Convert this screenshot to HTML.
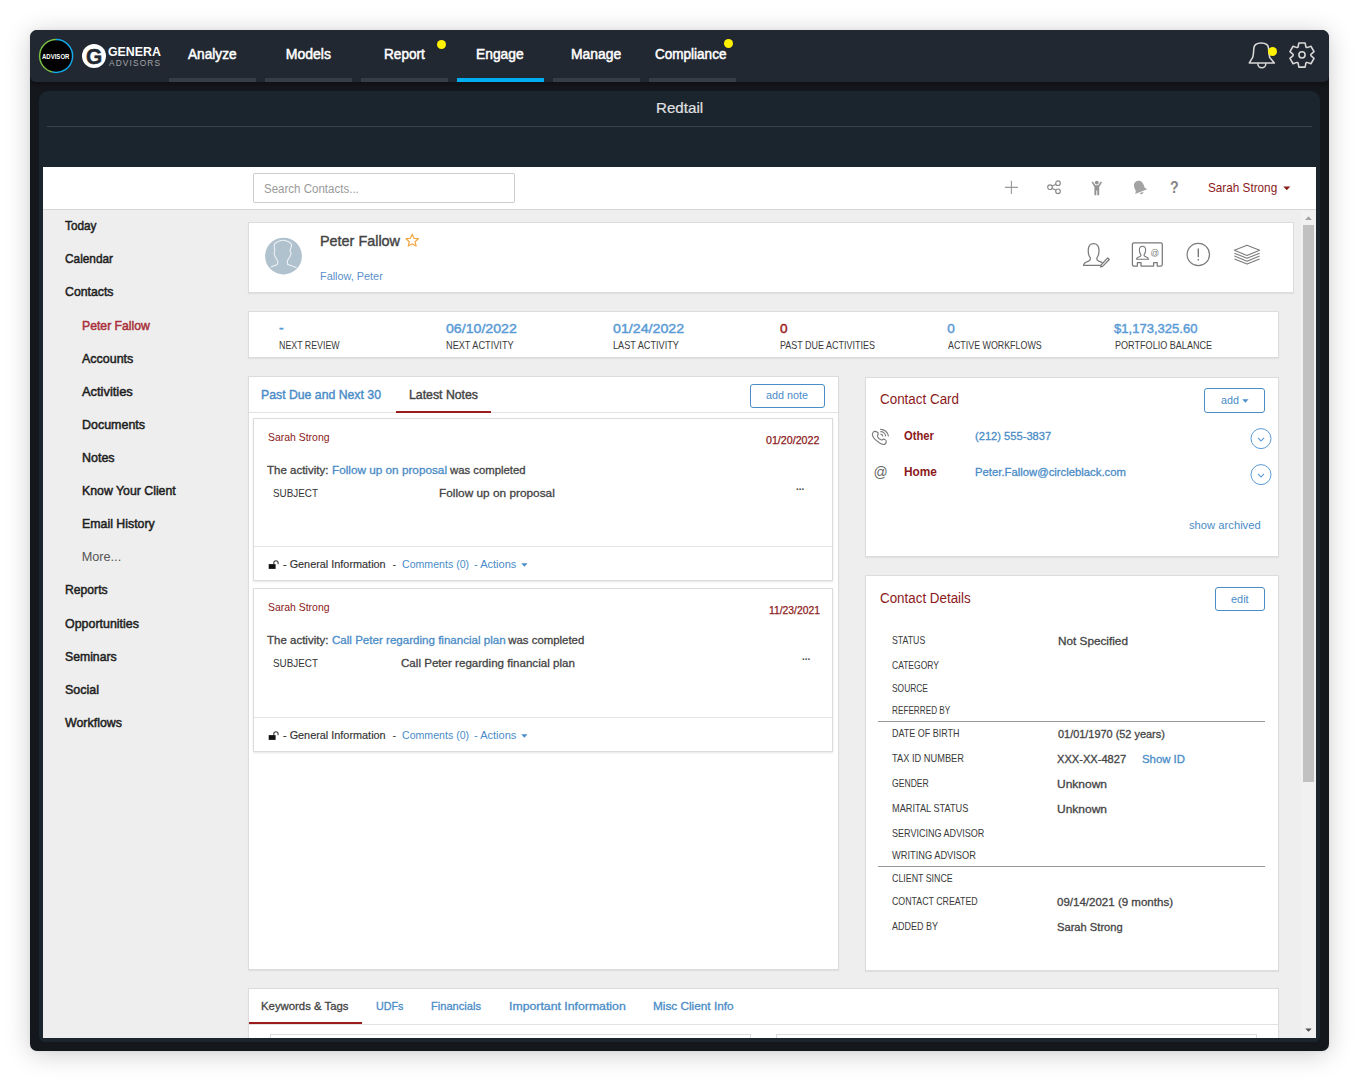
<!DOCTYPE html>
<html lang="en"><head><meta charset="utf-8"><title>Redtail - Peter Fallow</title>
<style>
html,body{margin:0;padding:0}
body{width:1359px;height:1081px;background:#fff;position:relative;overflow:hidden;font-family:"Liberation Sans",sans-serif}
.t{position:absolute;white-space:nowrap;transform-origin:0 50%;line-height:normal}
.a{position:absolute;box-sizing:border-box}
.card{position:absolute;box-sizing:border-box;background:#fff;border:1px solid #dcdcdc;box-shadow:0 1px 1px rgba(0,0,0,.06)}
.btn{position:absolute;box-sizing:border-box;border:1px solid #4a8cc7;border-radius:3px;background:#fff}
.ul{position:absolute;top:78px;height:4px;width:87px;background:#363d47}
.dot{position:absolute;width:9px;height:9px;border-radius:50%;background:#fff200}
svg{position:absolute;overflow:visible}
</style></head><body>
<!-- window -->
<div class="a" id="win" style="left:30px;top:30px;width:1299px;height:1021px;background:#14171b;border-radius:7px;box-shadow:0 3px 26px rgba(0,0,0,.2),0 0 4px rgba(0,0,0,.05);overflow:hidden"><div class="a" id="nav" style="left:0;top:0;width:1299px;height:52px;background:#222831;border-radius:7px 7px 6px 6px;box-shadow:0 2px 5px rgba(0,0,0,.35)"></div></div>
<div class="a" id="panel" style="left:39px;top:91px;width:1281px;height:951px;background:#1b252e;border-radius:9px 9px 6px 6px"></div>
<div class="a" style="left:47px;top:126px;width:1265px;height:1px;background:#36424c"></div>
<div class="ul" style="left:169px"></div><div class="ul" style="left:265px"></div><div class="ul" style="left:361px"></div>
<div class="ul" style="left:457px;background:#00aeef"></div><div class="ul" style="left:553px"></div><div class="ul" style="left:649px"></div>
<div class="dot" style="left:437px;top:40px"></div><div class="dot" style="left:724px;top:39px"></div>
<!-- advisor badge + logo -->
<svg style="left:38px;top:38.4px" width="36" height="36" viewBox="0 0 36 36">
 <circle cx="18" cy="18" r="16.5" fill="#000"/>
 <path d="M18 1.5A16.5 16.5 0 0 0 14.5 34.1" fill="none" stroke="#7ac143" stroke-width="1.5"/>
 <path d="M18 1.5A16.5 16.5 0 1 1 14.5 34.1" fill="none" stroke="#14a9ea" stroke-width="1.5"/>
</svg>
<div class="a" style="left:82px;top:44px;width:24.2px;height:24.2px;border-radius:50%;background:#fff"></div>
<!-- bell + gear -->
<svg style="left:1246px;top:40px" width="32" height="32" viewBox="0 0 32 32" fill="none" stroke="#d8d8d8" stroke-width="1.55" stroke-linejoin="round" stroke-linecap="round">
 <path d="M3.3 22.9L6.7 17.4C7.6 14.5 7.7 11 7.8 8.6C8 5 11 3 15.2 3S22.4 5 22.6 8.6C22.7 11 22.8 14.5 23.7 17.4L28.4 22.9Z"/>
 <path d="M11.8 23.8a4 4 0 0 0 8 0"/>
</svg>
<div class="dot" style="left:1267.6px;top:46.8px;width:9.6px;height:9.6px"></div>
<svg style="left:1288px;top:41.3px" width="28" height="28" viewBox="-14 -14 28 28" fill="none" stroke="#d8d8d8" stroke-width="1.55" stroke-linejoin="round">
 <path d="M-3.90 -8.00L-3.13 -12.10L3.13 -12.10L3.90 -8.00L4.98 -7.38L8.92 -8.76L12.05 -3.34L8.88 -0.62L8.88 0.62L12.05 3.34L8.92 8.76L4.98 7.38L3.90 8.00L3.13 12.10L-3.13 12.10L-3.90 8.00L-4.98 7.38L-8.92 8.76L-12.05 3.34L-8.88 0.62L-8.88 -0.62L-12.05 -3.34L-8.92 -8.76L-4.98 -7.38Z"/>
 <circle cx="0" cy="-0.2" r="3.1"/>
</svg>
<!-- iframe -->
<div class="a" id="ifr" style="left:43px;top:167px;width:1273px;height:871px;background:#eee"></div>
<div class="a" style="left:43px;top:167px;width:1273px;height:42px;background:#fff"></div>
<div class="a" style="left:43px;top:208.6px;width:1273px;height:1.8px;background:#d7d7d7"></div>
<div class="a" style="left:253px;top:173px;width:262px;height:30px;border:1px solid #ccc;border-radius:2px;background:#fff"></div>
<!-- scrollbar -->
<div class="a" style="left:1301px;top:211px;width:15px;height:827px;background:#f1f1f1"></div>
<div class="a" style="left:1303px;top:225.3px;width:11px;height:556.4px;background:#c1c1c1"></div>
<svg style="left:1301px;top:211px" width="15" height="14" viewBox="0 0 15 14"><path d="M4.1 8.9L7.5 5.3L10.9 8.9Z" fill="#a3a3a3"/></svg>
<svg style="left:1301px;top:1023px" width="15" height="14" viewBox="0 0 15 14"><path d="M4.3 5.4L7.5 8.8L10.7 5.4Z" fill="#505050"/></svg>
<!-- header icons -->
<svg style="left:1004px;top:180px" width="15" height="15" viewBox="0 0 15 15" stroke="#999" stroke-width="1.1" fill="none"><path d="M7.4 .7V14.1M.9 7.4H13.9"/></svg>
<svg style="left:1046px;top:180px" width="16" height="15" viewBox="0 0 16 15" stroke="#8a8a8a" stroke-width="1.2" fill="none"><circle cx="12" cy="3.2" r="2.3"/><circle cx="4" cy="7.2" r="2.3"/><circle cx="12" cy="11.3" r="2.3"/><path d="M6.1 6.2L9.9 4.2M6.1 8.2L9.9 10.3"/></svg>
<svg style="left:1090px;top:180px" width="14" height="16" viewBox="0 0 14 16" fill="#939393"><circle cx="6.8" cy="2.6" r="1.9"/><path d="M1.6 2.2L2.9 1.5L5.4 5.2H8.2L10.7 1.5L12 2.2L9.2 6.9V15.2H7.3V10.6H6.3V15.2H4.4V6.9Z"/></svg>
<svg style="left:1131px;top:179px" width="17" height="17" viewBox="0 0 17 17"><g transform="rotate(-22 8.5 8.5)" fill="#a3a3a3"><path d="M8.5 1.6C5.3 1.6 3.7 4 3.7 7.3V10.6L2 12.9H15L13.3 10.6V7.3C13.3 4 11.7 1.6 8.5 1.6Z"/><path d="M6.6 13.8a1.9 1.7 0 0 0 3.8 0Z"/></g></svg>
<svg style="left:1283px;top:186px" width="8" height="5" viewBox="0 0 8 5"><path d="M.3 .4H7.3L3.8 4.3Z" fill="#8b1a1a"/></svg>
<!-- cards -->
<div class="card" style="left:248px;top:222px;width:1046px;height:71px"></div>
<div class="card" style="left:248px;top:310.5px;width:1031px;height:47.5px"></div>
<div class="card" style="left:248px;top:376px;width:591px;height:594px"></div>
<div class="card" style="left:865px;top:377px;width:414px;height:180px"></div>
<div class="card" style="left:865px;top:575px;width:414px;height:396px"></div>
<div class="card" style="left:248px;top:988px;width:1031px;height:60px;clip-path:inset(-2px -2px 10px -2px)"></div>
<!-- avatar -->
<svg style="left:265px;top:238px" width="37" height="37" viewBox="0 0 37 37"><circle cx="18.5" cy="18.1" r="18.4" fill="#b1c2cf"/>
<path d="M6 29.1L12.2 26.4L13 23.8L9.8 18L9.1 15.1L9.8 12.7L9.1 7.4Q9.3 5.2 12.2 4Q15 2.3 18 2.3Q21 2.3 23.8 4Q26.7 5.2 26.7 7.4L25 12.7L26.2 15.1L25.2 18L22.4 22.8V26.2L31.5 29.8" fill="none" stroke="#edf2f6" stroke-width="1.05" stroke-linejoin="round"/></svg>
<!-- star -->
<svg style="left:405px;top:233px" width="15" height="15" viewBox="0 0 15 15"><path d="M7.2 1.2L9 5.3L13.4 5.7L10.1 8.7L11.1 13.1L7.2 10.8L3.3 13.1L4.3 8.7L1 5.7L5.4 5.3Z" fill="none" stroke="#f4a640" stroke-width="1.2" stroke-linejoin="round"/></svg>
<!-- card A icons -->
<svg style="left:1082px;top:242px" width="30" height="28" viewBox="0 0 30 28" fill="none" stroke="#7a7a7a" stroke-width="1.25" stroke-linejoin="round" stroke-linecap="round">
 <path d="M18.2 23.4H1.6C1.9 20.6 4.2 19.9 6.6 19.1C8.3 18.5 8.7 17.3 8.2 15.6C6.4 13.6 6.1 10.8 6.3 7.6C6.5 3.9 8.6 1.6 11.6 1.6S16.7 3.9 16.9 7.6C17.1 10.8 16.8 13.6 15 15.6C14.5 17.3 14.9 18.5 16.6 19.1C17.8 19.5 19 19.9 19.9 20.4"/>
 <path d="M25.7 15.9L27.3 17.5L20.6 24.4L18.6 25L19.1 23Z"/>
</svg>
<svg style="left:1131px;top:241px" width="33" height="27" viewBox="0 0 33 27" fill="none" stroke="#7a7a7a" stroke-width="1.25" stroke-linejoin="round">
 <path d="M2.8 1.8H29.9Q31.3 1.8 31.3 3.2V23.6Q31.3 25 29.9 25H26.2V21.6H22.6V25H10V21.6H6.4V25H2.8Q1.4 25 1.4 23.6V3.2Q1.4 1.8 2.8 1.8Z"/>
 <path d="M5.4 18.2H17.6C17.4 16.2 15.4 16 13.8 15.3C13 14.9 12.9 14 13.3 13.3C14.6 11.8 14.7 10.2 14.6 8.6C14.5 6.4 13.2 5.2 11.5 5.2S8.5 6.4 8.4 8.6C8.3 10.2 8.4 11.8 9.7 13.3C10.1 14 10 14.9 9.2 15.3C7.6 16 5.6 16.2 5.4 18.2Z" stroke-width="1.1"/>
</svg>
<svg style="left:1186px;top:243px" width="24" height="24" viewBox="0 0 24 24" fill="none" stroke="#7a7a7a" stroke-width="1.2"><circle cx="12.3" cy="11.5" r="11.2"/><path d="M12.3 5.4V14.2M12.3 16V17.6" stroke-width="1.4"/></svg>
<svg style="left:1233px;top:244px" width="28" height="22" viewBox="0 0 28 22" fill="none" stroke="#7a7a7a" stroke-width="1.05" stroke-linejoin="round">
 <path d="M14 1.2L26.6 6.3L14 11.4L1.4 6.3Z"/><path d="M1.4 9.2L14 14.3L26.6 9.2M1.4 12.1L14 17.2L26.6 12.1M1.4 15L14 20.1L26.6 15"/>
</svg>
<!-- notes card internals -->
<div class="a" style="left:249px;top:412px;width:589px;height:1px;background:#e2e2e2"></div>
<div class="a" style="left:396px;top:411px;width:95px;height:2px;background:#9b1c1c"></div>
<div class="btn" style="left:749.5px;top:383.5px;width:75px;height:24px"></div>
<div class="card" style="left:253px;top:418px;width:580px;height:163px;box-shadow:0 1px 2px rgba(0,0,0,.10)"></div>
<div class="a" style="left:254px;top:546px;width:578px;height:1px;background:#e4e4e4"></div>
<div class="card" style="left:253px;top:588px;width:580px;height:164px;box-shadow:0 1px 2px rgba(0,0,0,.10)"></div>
<div class="a" style="left:254px;top:717px;width:578px;height:1px;background:#e4e4e4"></div>
<svg style="left:268px;top:559px" width="12" height="10" viewBox="0 0 12 10"><path d="M.7 5.1H7.6V9.9H.7Z" fill="#111"/><path d="M5.8 5.1V3.9A2.15 2.15 0 0 1 10.1 3.9V5.3" fill="none" stroke="#3a3a3a" stroke-width="1.05"/></svg>
<svg style="left:268px;top:730px" width="12" height="10" viewBox="0 0 12 10"><path d="M.7 5.1H7.6V9.9H.7Z" fill="#111"/><path d="M5.8 5.1V3.9A2.15 2.15 0 0 1 10.1 3.9V5.3" fill="none" stroke="#3a3a3a" stroke-width="1.05"/></svg>
<svg style="left:521px;top:563px" width="7" height="4" viewBox="0 0 7 4"><path d="M.3 .3H6.5L3.4 3.7Z" fill="#4a8cc7"/></svg>
<svg style="left:521px;top:734px" width="7" height="4" viewBox="0 0 7 4"><path d="M.3 .3H6.5L3.4 3.7Z" fill="#4a8cc7"/></svg>
<!-- contact card internals -->
<div class="btn" style="left:1204px;top:388px;width:61px;height:25px"></div>
<svg style="left:1242px;top:399px" width="7" height="4" viewBox="0 0 7 4"><path d="M.3 .3H6.5L3.4 3.7Z" fill="#4a8cc7"/></svg>
<svg style="left:1250px;top:428px" width="22" height="22" viewBox="0 0 22 22" fill="none" stroke="#5b9bd5" stroke-width="1"><circle cx="11" cy="10.6" r="10"/><path d="M7.9 9.9L11 12.9L14.1 9.9" stroke-width="1.05"/></svg>
<svg style="left:1250px;top:464px" width="22" height="22" viewBox="0 0 22 22" fill="none" stroke="#5b9bd5" stroke-width="1"><circle cx="11" cy="10.6" r="10"/><path d="M7.9 9.9L11 12.9L14.1 9.9" stroke-width="1.05"/></svg>
<svg style="left:866px;top:422px" width="30" height="30" viewBox="0 0 30 30" fill="none" stroke="#7d7d7d" stroke-width="1.15" stroke-linecap="round" stroke-linejoin="round">
 <path d="M6.4 12.8C6.2 10.5 8 9.2 9.2 9.4C10.8 9.7 12.4 10.8 12.2 11.9C12 13 11.2 13.6 11.4 14.4C12 15.8 14 17.6 15.5 18C16.3 18.2 16.7 17.2 17.4 17.1C18.6 17 20.6 18.4 20.3 19.6C20 21.2 18.6 22.6 17.4 22.5C14 22.2 7 16.5 6.4 12.8Z"/>
 <path d="M14.5 12.2A2.6 2.6 0 0 1 16.9 14.4M14.4 9.7A5.2 5.2 0 0 1 19.7 14.4M14.2 7.4A7.9 7.9 0 0 1 22.5 14.4" stroke-width="1.2" stroke-linecap="butt"/>
</svg>
<!-- details internals -->
<div class="btn" style="left:1215px;top:587px;width:50px;height:24px"></div>
<div class="a" style="left:878px;top:721px;width:387px;height:1px;background:#999"></div>
<div class="a" style="left:878px;top:866px;width:387px;height:1px;background:#999"></div>
<!-- bottom card internals -->
<div class="a" style="left:249px;top:1024px;width:1029px;height:1px;background:#e2e2e2"></div>
<div class="a" style="left:249px;top:1022px;width:113px;height:2px;background:#9b1c1c"></div>
<div class="a" style="left:270px;top:1033.6px;width:481px;height:5px;background:#fff;border:1px solid #dcdcdc;border-bottom:0"></div>
<div class="a" style="left:776px;top:1033.6px;width:481px;height:5px;background:#fff;border:1px solid #dcdcdc;border-bottom:0"></div>
<!-- bottom mask of window frame -->
<div class="a" style="left:43px;top:1038px;width:1273px;height:4px;background:#1b252e"></div>
<div class="a" style="left:39px;top:1042px;width:1281px;height:9px;background:#14171b"></div>
<span class="t" style="left:188.0px;top:46px;font-size:14px;color:#ffffff;-webkit-text-stroke:0.5px;transform:scaleX(0.975);">Analyze</span>
<span class="t" style="left:285.8px;top:46px;font-size:14px;color:#ffffff;-webkit-text-stroke:0.5px;">Models</span>
<span class="t" style="left:383.5px;top:46px;font-size:14px;color:#ffffff;-webkit-text-stroke:0.5px;transform:scaleX(0.971);">Report</span>
<span class="t" style="left:476.2px;top:46px;font-size:14px;color:#ffffff;-webkit-text-stroke:0.5px;transform:scaleX(0.986);">Engage</span>
<span class="t" style="left:571.1px;top:46px;font-size:14px;color:#ffffff;-webkit-text-stroke:0.5px;transform:scaleX(0.991);">Manage</span>
<span class="t" style="left:655.1px;top:46px;font-size:14px;color:#ffffff;-webkit-text-stroke:0.5px;transform:scaleX(0.966);">Compliance</span>
<span class="t" style="left:655.9px;top:99px;font-size:15px;color:#e0e0e0;-webkit-text-stroke:0.2px;transform:scaleX(1.009);">Redtail</span>
<span class="t" style="left:108.0px;top:45px;font-size:12.3px;color:#ffffff;font-weight:700;transform:scaleX(1.005);">GENERA</span>
<span class="t" style="left:108.9px;top:58px;font-size:9px;color:#a3a5aa;letter-spacing:1.25px;transform:scaleX(0.922);">ADVISORS</span>
<span class="t" style="left:42.3px;top:53px;font-size:6.8px;color:#ffffff;font-weight:700;transform:scaleX(0.885);">ADVISOR</span>
<span class="t" style="left:85.6px;top:45px;font-size:21.5px;color:#222831;font-weight:700;-webkit-text-stroke:.5px #222831;transform:scaleX(0.970);">G</span>
<span class="t" style="left:263.8px;top:182px;font-size:12.5px;color:#9a9a9a;transform:scaleX(0.922);">Search Contacts...</span>
<span class="t" style="left:1208.2px;top:180px;font-size:13px;color:#8b1a1a;transform:scaleX(0.903);">Sarah Strong</span>
<span class="t" style="left:1169.7px;top:178px;font-size:16.5px;color:#858585;font-weight:700;transform:scaleX(0.860);">?</span>
<span class="t" style="left:64.5px;top:219px;font-size:12.7px;color:#1e1e1e;-webkit-text-stroke:0.5px;transform:scaleX(0.929);">Today</span>
<span class="t" style="left:64.5px;top:252px;font-size:12.7px;color:#1e1e1e;-webkit-text-stroke:0.5px;transform:scaleX(0.933);">Calendar</span>
<span class="t" style="left:64.5px;top:285px;font-size:12.7px;color:#1e1e1e;-webkit-text-stroke:0.5px;transform:scaleX(0.969);">Contacts</span>
<span class="t" style="left:81.7px;top:319px;font-size:12.7px;color:#a9303a;-webkit-text-stroke:0.5px;transform:scaleX(0.963);">Peter Fallow</span>
<span class="t" style="left:81.7px;top:352px;font-size:12.7px;color:#1e1e1e;-webkit-text-stroke:0.5px;transform:scaleX(0.982);">Accounts</span>
<span class="t" style="left:81.7px;top:385px;font-size:12.7px;color:#1e1e1e;-webkit-text-stroke:0.5px;transform:scaleX(1.015);">Activities</span>
<span class="t" style="left:81.7px;top:418px;font-size:12.7px;color:#1e1e1e;-webkit-text-stroke:0.5px;transform:scaleX(0.982);">Documents</span>
<span class="t" style="left:81.7px;top:451px;font-size:12.7px;color:#1e1e1e;-webkit-text-stroke:0.5px;transform:scaleX(0.983);">Notes</span>
<span class="t" style="left:81.7px;top:484px;font-size:12.7px;color:#1e1e1e;-webkit-text-stroke:0.5px;transform:scaleX(0.970);">Know Your Client</span>
<span class="t" style="left:81.7px;top:517px;font-size:12.7px;color:#1e1e1e;-webkit-text-stroke:0.5px;transform:scaleX(0.973);">Email History</span>
<span class="t" style="left:81.7px;top:550px;font-size:12.7px;color:#555555;">More...</span>
<span class="t" style="left:64.5px;top:583px;font-size:12.7px;color:#1e1e1e;-webkit-text-stroke:0.5px;transform:scaleX(0.959);">Reports</span>
<span class="t" style="left:64.5px;top:617px;font-size:12.7px;color:#1e1e1e;-webkit-text-stroke:0.5px;transform:scaleX(0.979);">Opportunities</span>
<span class="t" style="left:64.5px;top:650px;font-size:12.7px;color:#1e1e1e;-webkit-text-stroke:0.5px;transform:scaleX(0.964);">Seminars</span>
<span class="t" style="left:64.5px;top:683px;font-size:12.7px;color:#1e1e1e;-webkit-text-stroke:0.5px;transform:scaleX(0.984);">Social</span>
<span class="t" style="left:64.5px;top:716px;font-size:12.7px;color:#1e1e1e;-webkit-text-stroke:0.5px;transform:scaleX(0.977);">Workflows</span>
<span class="t" style="left:319.9px;top:233px;font-size:14.3px;color:#444444;-webkit-text-stroke:0.4px;transform:scaleX(1.007);">Peter Fallow</span>
<span class="t" style="left:320.1px;top:270px;font-size:11.3px;color:#5b8fc9;transform:scaleX(0.961);">Fallow, Peter</span>
<span class="t" style="left:1150.5px;top:248px;font-size:8.5px;color:#7a7a7a;">@</span>
<span class="t" style="left:279.0px;top:320px;font-size:14px;color:#5b9bd5;-webkit-text-stroke:0.45px;">-</span>
<span class="t" style="left:445.7px;top:321px;font-size:13.6px;color:#5b9bd5;-webkit-text-stroke:0.45px;transform:scaleX(1.041);">06/10/2022</span>
<span class="t" style="left:612.8px;top:321px;font-size:13.6px;color:#5b9bd5;-webkit-text-stroke:0.45px;transform:scaleX(1.046);">01/24/2022</span>
<span class="t" style="left:780.0px;top:321px;font-size:13.6px;color:#9b1c1c;-webkit-text-stroke:0.45px;">0</span>
<span class="t" style="left:947.2px;top:321px;font-size:13.6px;color:#5b9bd5;-webkit-text-stroke:0.45px;">0</span>
<span class="t" style="left:1114.4px;top:321px;font-size:13.6px;color:#5b9bd5;-webkit-text-stroke:0.45px;transform:scaleX(0.960);">$1,173,325.60</span>
<span class="t" style="left:279.3px;top:340px;font-size:10.4px;color:#3a3a3a;transform:scaleX(0.850);">NEXT REVIEW</span>
<span class="t" style="left:445.9px;top:340px;font-size:10.4px;color:#3a3a3a;transform:scaleX(0.883);">NEXT ACTIVITY</span>
<span class="t" style="left:613.0px;top:340px;font-size:10.4px;color:#3a3a3a;transform:scaleX(0.881);">LAST ACTIVITY</span>
<span class="t" style="left:780.3px;top:340px;font-size:10.4px;color:#3a3a3a;transform:scaleX(0.864);">PAST DUE ACTIVITIES</span>
<span class="t" style="left:947.5px;top:340px;font-size:10.4px;color:#3a3a3a;transform:scaleX(0.854);">ACTIVE WORKFLOWS</span>
<span class="t" style="left:1114.6px;top:340px;font-size:10.4px;color:#3a3a3a;transform:scaleX(0.873);">PORTFOLIO BALANCE</span>
<span class="t" style="left:261.4px;top:388px;font-size:12.2px;color:#4a8cc7;-webkit-text-stroke:0.4px;transform:scaleX(1.006);">Past Due and Next 30</span>
<span class="t" style="left:408.7px;top:388px;font-size:12.2px;color:#444444;-webkit-text-stroke:0.4px;transform:scaleX(1.008);">Latest Notes</span>
<span class="t" style="left:766.1px;top:389px;font-size:11px;color:#4a8cc7;transform:scaleX(0.979);">add note</span>
<span class="t" style="left:268.3px;top:431px;font-size:11px;color:#8b1a1a;transform:scaleX(0.949);">Sarah Strong</span>
<span class="t" style="left:765.5px;top:434px;font-size:10.5px;color:#8b1a1a;-webkit-text-stroke:0.25px;transform:scaleX(1.015);">01/20/2022</span>
<span class="t" style="left:267.1px;top:464px;font-size:11.4px;color:#444444;-webkit-text-stroke:0.3px;transform:scaleX(1.010);">The activity:</span>
<span class="t" style="left:331.6px;top:464px;font-size:11.4px;color:#4a8cc7;-webkit-text-stroke:0.3px;transform:scaleX(1.032);">Follow up on proposal</span>
<span class="t" style="left:450.2px;top:464px;font-size:11.4px;color:#444444;-webkit-text-stroke:0.3px;transform:scaleX(0.994);">was completed</span>
<span class="t" style="left:273.4px;top:487px;font-size:11.2px;color:#333333;transform:scaleX(0.882);">SUBJECT</span>
<span class="t" style="left:438.7px;top:487px;font-size:11.4px;color:#444444;-webkit-text-stroke:0.3px;transform:scaleX(1.039);">Follow up on proposal</span>
<span class="t" style="left:795.8px;top:481px;font-size:10px;color:#4a4a4a;font-weight:700;transform:scaleX(0.980);">...</span>
<span class="t" style="left:283.1px;top:558px;font-size:10.8px;color:#333333;-webkit-text-stroke:0.15px;transform:scaleX(1.006);">- General Information</span>
<span class="t" style="left:392.5px;top:558px;font-size:10.8px;color:#333333;">-</span>
<span class="t" style="left:401.7px;top:558px;font-size:10.8px;color:#4a8cc7;transform:scaleX(0.981);">Comments (0)</span>
<span class="t" style="left:474.4px;top:558px;font-size:10.8px;color:#4a8cc7;transform:scaleX(1.021);">- Actions</span>
<span class="t" style="left:268.3px;top:601px;font-size:11px;color:#8b1a1a;transform:scaleX(0.949);">Sarah Strong</span>
<span class="t" style="left:768.5px;top:604px;font-size:10.5px;color:#8b1a1a;-webkit-text-stroke:0.25px;transform:scaleX(0.985);">11/23/2021</span>
<span class="t" style="left:267.1px;top:634px;font-size:11.4px;color:#444444;-webkit-text-stroke:0.3px;transform:scaleX(1.010);">The activity:</span>
<span class="t" style="left:331.6px;top:634px;font-size:11.4px;color:#4a8cc7;-webkit-text-stroke:0.3px;transform:scaleX(1.016);">Call Peter regarding financial plan</span>
<span class="t" style="left:508.3px;top:634px;font-size:11.4px;color:#444444;-webkit-text-stroke:0.3px;">was completed</span>
<span class="t" style="left:273.4px;top:657px;font-size:11.2px;color:#333333;transform:scaleX(0.882);">SUBJECT</span>
<span class="t" style="left:400.7px;top:657px;font-size:11.4px;color:#444444;-webkit-text-stroke:0.3px;transform:scaleX(1.017);">Call Peter regarding financial plan</span>
<span class="t" style="left:801.8px;top:651px;font-size:10px;color:#4a4a4a;font-weight:700;transform:scaleX(0.980);">...</span>
<span class="t" style="left:283.1px;top:729px;font-size:10.8px;color:#333333;-webkit-text-stroke:0.15px;transform:scaleX(1.006);">- General Information</span>
<span class="t" style="left:392.5px;top:729px;font-size:10.8px;color:#333333;">-</span>
<span class="t" style="left:401.7px;top:729px;font-size:10.8px;color:#4a8cc7;transform:scaleX(0.981);">Comments (0)</span>
<span class="t" style="left:474.4px;top:729px;font-size:10.8px;color:#4a8cc7;transform:scaleX(1.021);">- Actions</span>
<span class="t" style="left:880.1px;top:391px;font-size:14px;color:#8b1a1a;transform:scaleX(0.958);">Contact Card</span>
<span class="t" style="left:1220.9px;top:394px;font-size:11px;color:#4a8cc7;transform:scaleX(0.976);">add</span>
<span class="t" style="left:903.5px;top:429px;font-size:12px;color:#8b1a1a;font-weight:700;transform:scaleX(0.935);">Other</span>
<span class="t" style="left:975.4px;top:430px;font-size:11.4px;color:#4a8cc7;-webkit-text-stroke:0.3px;transform:scaleX(0.978);">(212) 555-3837</span>
<span class="t" style="left:873.6px;top:464px;font-size:14px;color:#666666;">@</span>
<span class="t" style="left:903.5px;top:465px;font-size:12px;color:#8b1a1a;font-weight:700;transform:scaleX(0.989);">Home</span>
<span class="t" style="left:975.4px;top:466px;font-size:11.4px;color:#4a8cc7;-webkit-text-stroke:0.3px;transform:scaleX(0.992);">Peter.Fallow@circleblack.com</span>
<span class="t" style="left:1189.4px;top:519px;font-size:11.3px;color:#4a8cc7;transform:scaleX(0.993);">show archived</span>
<span class="t" style="left:880.1px;top:590px;font-size:14px;color:#8b1a1a;transform:scaleX(0.956);">Contact Details</span>
<span class="t" style="left:1231.0px;top:593px;font-size:11px;color:#4a8cc7;transform:scaleX(0.991);">edit</span>
<span class="t" style="left:891.8px;top:635px;font-size:10.4px;color:#3a3a3a;transform:scaleX(0.843);">STATUS</span>
<span class="t" style="left:891.8px;top:660px;font-size:10.4px;color:#3a3a3a;transform:scaleX(0.818);">CATEGORY</span>
<span class="t" style="left:891.8px;top:683px;font-size:10.4px;color:#3a3a3a;transform:scaleX(0.808);">SOURCE</span>
<span class="t" style="left:891.8px;top:705px;font-size:10.4px;color:#3a3a3a;transform:scaleX(0.789);">REFERRED BY</span>
<span class="t" style="left:891.8px;top:728px;font-size:10.4px;color:#3a3a3a;transform:scaleX(0.863);">DATE OF BIRTH</span>
<span class="t" style="left:891.7px;top:753px;font-size:10.4px;color:#3a3a3a;transform:scaleX(0.893);">TAX ID NUMBER</span>
<span class="t" style="left:891.8px;top:778px;font-size:10.4px;color:#3a3a3a;transform:scaleX(0.828);">GENDER</span>
<span class="t" style="left:891.7px;top:803px;font-size:10.4px;color:#3a3a3a;transform:scaleX(0.885);">MARITAL STATUS</span>
<span class="t" style="left:891.7px;top:828px;font-size:10.4px;color:#3a3a3a;transform:scaleX(0.870);">SERVICING ADVISOR</span>
<span class="t" style="left:891.7px;top:850px;font-size:10.4px;color:#3a3a3a;transform:scaleX(0.892);">WRITING ADVISOR</span>
<span class="t" style="left:891.8px;top:873px;font-size:10.4px;color:#3a3a3a;transform:scaleX(0.850);">CLIENT SINCE</span>
<span class="t" style="left:891.8px;top:896px;font-size:10.4px;color:#3a3a3a;transform:scaleX(0.848);">CONTACT CREATED</span>
<span class="t" style="left:891.8px;top:921px;font-size:10.4px;color:#3a3a3a;transform:scaleX(0.865);">ADDED BY</span>
<span class="t" style="left:1057.7px;top:635px;font-size:11.4px;color:#444444;-webkit-text-stroke:0.3px;transform:scaleX(1.032);">Not Specified</span>
<span class="t" style="left:1057.5px;top:728px;font-size:11.4px;color:#444444;-webkit-text-stroke:0.3px;transform:scaleX(0.958);">01/01/1970 (52 years)</span>
<span class="t" style="left:1057.4px;top:753px;font-size:11.4px;color:#444444;-webkit-text-stroke:0.3px;transform:scaleX(0.975);">XXX-XX-4827</span>
<span class="t" style="left:1142.2px;top:753px;font-size:11.4px;color:#4a8cc7;-webkit-text-stroke:0.3px;transform:scaleX(0.996);">Show ID</span>
<span class="t" style="left:1057.4px;top:778px;font-size:11.4px;color:#444444;-webkit-text-stroke:0.3px;transform:scaleX(1.052);">Unknown</span>
<span class="t" style="left:1057.4px;top:803px;font-size:11.4px;color:#444444;-webkit-text-stroke:0.3px;transform:scaleX(1.052);">Unknown</span>
<span class="t" style="left:1057.4px;top:896px;font-size:11.4px;color:#444444;-webkit-text-stroke:0.3px;transform:scaleX(1.012);">09/14/2021 (9 months)</span>
<span class="t" style="left:1057.4px;top:921px;font-size:11.4px;color:#444444;-webkit-text-stroke:0.3px;transform:scaleX(0.979);">Sarah Strong</span>
<span class="t" style="left:261.3px;top:1000px;font-size:11.2px;color:#444444;-webkit-text-stroke:0.3px;transform:scaleX(1.014);">Keywords &amp; Tags</span>
<span class="t" style="left:375.9px;top:1000px;font-size:11.2px;color:#4a8cc7;-webkit-text-stroke:0.3px;transform:scaleX(0.961);">UDFs</span>
<span class="t" style="left:430.8px;top:1000px;font-size:11.2px;color:#4a8cc7;-webkit-text-stroke:0.3px;transform:scaleX(0.992);">Financials</span>
<span class="t" style="left:508.5px;top:1000px;font-size:11.2px;color:#4a8cc7;-webkit-text-stroke:0.3px;transform:scaleX(1.098);">Important Information</span>
<span class="t" style="left:652.6px;top:1000px;font-size:11.2px;color:#4a8cc7;-webkit-text-stroke:0.3px;transform:scaleX(1.053);">Misc Client Info</span>
</body></html>
